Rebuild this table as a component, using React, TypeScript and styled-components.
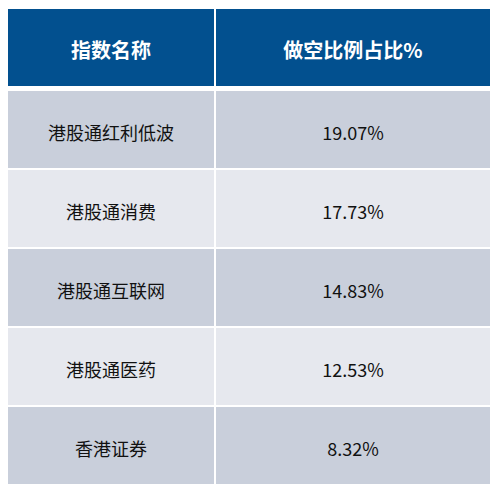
import React from "react";
import styled, { createGlobalStyle } from "styled-components";

const rows = [
  { name: "港股通红利低波", ratio: "19.07%" },
  { name: "港股通消费", ratio: "17.73%" },
  { name: "港股通互联网", ratio: "14.83%" },
  { name: "港股通医药", ratio: "12.53%" },
  { name: "香港证券", ratio: "8.32%" },
];

export default function App() {
  return (
    <>
      <GlobalStyle />
      <Table>
        <HeaderRow>
          <HeadCell>指数名称</HeadCell>
          <HeadCell>做空比例占比%</HeadCell>
        </HeaderRow>
        <Body>
          {rows.map((r, i) => (
            <Row key={r.name}>
              <Cell $light={i % 2 === 1}>{r.name}</Cell>
              <Cell $light={i % 2 === 1}>{r.ratio}</Cell>
            </Row>
          ))}
        </Body>
      </Table>
    </>
  );
}

const GlobalStyle = createGlobalStyle`
  body {
    margin: 0;
    background: #ffffff;
    font-family: "Noto Sans CJK SC", "Noto Sans", sans-serif;
  }
`;

const Table = styled.div`
  width: 482px;
  margin: 9px 0 0 8px;
  display: flex;
  flex-direction: column;
  gap: 5px;
`;

const HeaderRow = styled.div`
  display: grid;
  grid-template-columns: 206px 274px;
  column-gap: 2px;
  height: 77px;
`;

const HeadCell = styled.div`
  background: #02508f;
  color: #ffffff;
  font-weight: 700;
  font-size: 20px;
  display: flex;
  align-items: center;
  justify-content: center;
  padding-top: 3px;
`;

const Body = styled.div`
  display: flex;
  flex-direction: column;
  gap: 2px;
`;

const Row = styled.div`
  display: grid;
  grid-template-columns: 206px 274px;
  column-gap: 2px;
  height: 77px;
`;

const Cell = styled.div<{ $light: boolean }>`
  background: ${(p) => (p.$light ? "#e6e8ee" : "#c9cfdb")};
  color: #111111;
  font-size: 18px;
  display: flex;
  align-items: center;
  justify-content: center;
  padding-top: 4px;
`;
